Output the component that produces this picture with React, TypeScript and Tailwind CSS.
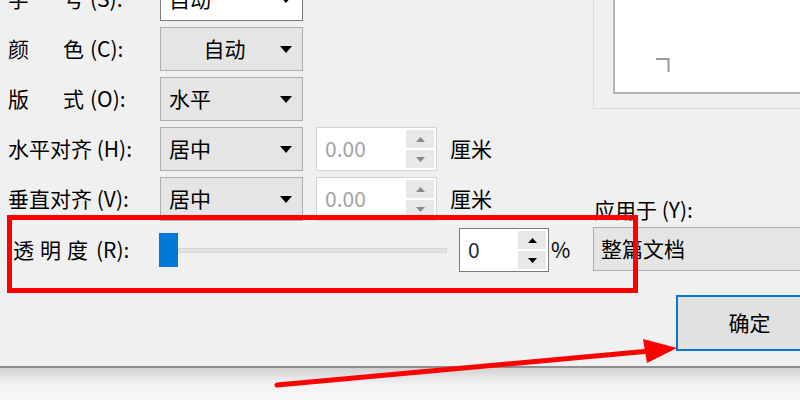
import React from 'react';

const FONT = { fontFamily: '"Noto Sans CJK SC", "Noto Sans", sans-serif' };

const Caret = () => (
  <svg width="12" height="7" viewBox="0 0 12 7" className="shrink-0">
    <path d="M0 0 H12 L6 7 Z" fill="#000" />
  </svg>
);

const Select: React.FC<{ value: string; white?: boolean; center?: boolean }> = ({ value, white, center }) => (
  <div
    className={`w-[143px] h-[44px] flex items-center pl-[8px] pr-[10px] border ${
      white ? 'bg-white border-[#7a7a7a]' : 'bg-[#e5e5e5] border-[#adadad]'
    }`}
  >
    <span className={`flex-1 ${center ? 'text-center' : ''}`}>{value}</span>
    <Caret />
  </div>
);

const Spin: React.FC<{ value: string; disabled?: boolean; width: string }> = ({ value, disabled, width }) => (
  <div
    className={`${width} h-[44px] bg-white flex items-center border ${
      disabled ? 'border-[#d3d3d3] text-[#a3a3a3]' : 'border-[#7a7a7a] text-[#1f2a44]'
    }`}
  >
    <span className="flex-1 pl-[8px]">{value}</span>
    <div className="w-[28px] h-[38px] mr-[2px] flex flex-col gap-[2px]">
      {[0, 1].map((i) => (
        <div key={i} className="flex-1 bg-[#e8e8e8] flex items-center justify-center">
          <svg width="9" height="5" viewBox="0 0 9 5">
            <path d={i === 0 ? 'M0 5 L4.5 0 L9 5 Z' : 'M0 0 H9 L4.5 5 Z'} fill={disabled ? '#8a8a8a' : '#000'} />
          </svg>
        </div>
      ))}
    </div>
  </div>
);

const Row: React.FC<{ label: React.ReactNode; children: React.ReactNode }> = ({ label, children }) => (
  <div className="h-[44px] flex items-center">
    <div className="w-[160px] pl-[8px] shrink-0">{label}</div>
    {children}
  </div>
);

const Spaced: React.FC<{ a: string; b: string; tail: string }> = ({ a, b, tail }) => (
  <span className="flex">
    <span className="w-[55px]">{a}</span>
    <span>{b}</span>
    <span className="ml-[6px]">{tail}</span>
  </span>
);

export default function App() {
  return (
    <div className="w-[800px] h-[400px] relative overflow-hidden bg-[#f0f0f0] text-[21px] text-[#000]" style={FONT}>
      <div className="h-[366px] flex overflow-hidden">
        {/* left column */}
        <div className="w-[593px] shrink-0 mt-[-23px] flex flex-col gap-[6px]">
          <Row label={<Spaced a="字" b="号" tail="(S):" />}>
            <Select value="自动" white />
          </Row>
          <Row label={<Spaced a="颜" b="色" tail="(C):" />}>
            <Select value="自动" center />
          </Row>
          <Row label={<Spaced a="版" b="式" tail="(O):" />}>
            <Select value="水平" />
          </Row>
          <Row label="水平对齐 (H):">
            <Select value="居中" />
            <div className="ml-[13px]">
              <Spin value="0.00" disabled width="w-[121px]" />
            </div>
            <span className="ml-[13px]">厘米</span>
          </Row>
          <Row label="垂直对齐 (V):">
            <Select value="居中" />
            <div className="ml-[13px]">
              <Spin value="0.00" disabled width="w-[121px]" />
            </div>
            <span className="ml-[13px]">厘米</span>
          </Row>
          <div className="h-[44px] mt-[1px] flex items-center">
            <div className="w-[159px] pl-[13px] shrink-0 flex gap-[6px]">
              <span>透</span>
              <span>明</span>
              <span>度</span>
              <span className="ml-[2px]">(R):</span>
            </div>
            <div className="w-[288px] flex items-center">
              <div className="w-[19px] h-[34px] bg-[#0078d7] shrink-0" />
              <div className="flex-1 h-[5px] bg-[#e3e3e3] border border-[#d6d6d6]" />
            </div>
            <div className="ml-[12px]">
              <Spin value="0" width="w-[90px]" />
            </div>
            <span className="ml-[2px]">%</span>
          </div>
        </div>

        {/* right column */}
        <div className="flex-1 flex flex-col">
          <div className="h-[111px] border-l border-b border-[#dadada] pl-[19px] pb-[14px] mt-[-2px]">
            <div className="h-full bg-white border-l-2 border-b-2 border-[#b4b4b4] relative">
              <svg className="absolute left-[41px] top-[60px]" width="14" height="14" viewBox="0 0 14 14">
                <path d="M0 1 H12.5 V14" fill="none" stroke="#9a9a9a" strokeWidth="2" />
              </svg>
            </div>
          </div>
          <span className="mt-[86px] leading-[28px] pl-[1px]">应用于 (Y):</span>
          <div className="mt-[4px] h-[44px] w-[230px] bg-[#e5e5e5] border border-[#adadad] flex items-center pl-[7px]">
            整篇文档
          </div>
          <div className="mt-[24px] ml-[83px] w-[150px] h-[56px] bg-[#e1e1e1] border-2 border-[#0078d7] flex items-center justify-center pr-[3px]">
            确定
          </div>
        </div>
      </div>
      <div className="h-[34px] border-t-2 border-[#8f8f8f] bg-gradient-to-b from-[#d2d2d2] via-[#f2f2f2] to-[#f7f7f7]" />

      {/* annotations */}
      <div className="absolute left-[7px] top-[215px] w-[631px] h-[78px] border-[5px] border-[#ff0000]" />
      <svg className="absolute left-0 top-0 pointer-events-none" width="800" height="400" viewBox="0 0 800 400">
        <line x1="277" y1="385" x2="650" y2="351" stroke="#ff0000" strokeWidth="5" strokeLinecap="round" />
        <path d="M643 339 L677 348 L647 363 Z" fill="#ff0000" />
      </svg>
    </div>
  );
}
